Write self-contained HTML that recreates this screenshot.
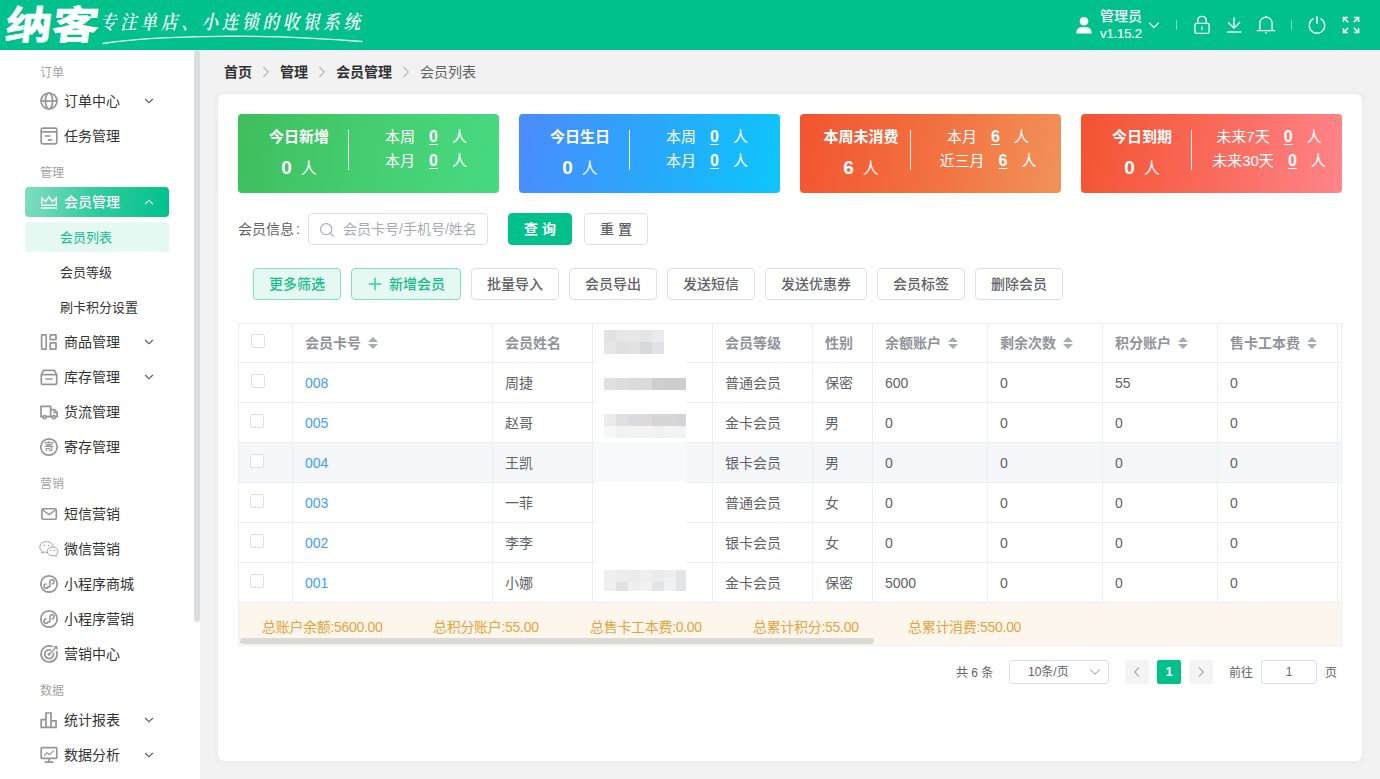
<!DOCTYPE html>
<html lang="zh-CN">
<head>
<meta charset="utf-8">
<title>会员列表 - 纳客收银系统</title>
<style>
*{box-sizing:border-box;margin:0;padding:0}
html,body{width:1380px;height:779px;overflow:hidden;background:#f2f2f2}
body{font-family:"Liberation Sans","Noto Sans CJK SC",sans-serif;font-size:14px;color:#333;-webkit-font-smoothing:antialiased}
#app{position:relative;width:1380px;height:779px;overflow:hidden;background:#f2f2f2}
.abs{position:absolute}
svg{display:block;overflow:visible}

/* ---------- header ---------- */
#hd{position:absolute;left:0;top:0;width:1380px;height:50px;background:#00c18b;color:#fff}
#hd .logo{position:absolute;left:6px;top:-2px;height:56px;line-height:56px;font-size:39px;font-weight:700;letter-spacing:0;-webkit-text-stroke:.8px #fff;white-space:nowrap;transform-origin:0 50%;transform:scale(1.19,1) skewX(-6deg)}
#hd .slogan{position:absolute;left:100px;top:10px;height:26px;line-height:26px;font-size:16.5px;letter-spacing:3.8px;white-space:nowrap;font-family:"Liberation Serif","Noto Serif CJK SC",serif;font-weight:600;font-style:italic;transform-origin:0 50%;transform:scaleY(1.18)}
#hd .swoosh{position:absolute;left:100px;top:33px}
#hd .user{position:absolute;left:1100px;top:7px;width:50px;font-size:14px;line-height:18px;white-space:nowrap;font-weight:500}
#hd .user .ver{font-size:13px;letter-spacing:-.1px;-webkit-text-stroke:.15px #fff}
#hd .ic{position:absolute}
#hd .sep{position:absolute;top:20px;width:1px;height:10px;background:rgba(255,255,255,.45)}

/* ---------- sidebar ---------- */
#sb{position:absolute;left:0;top:50px;width:200px;height:729px;background:#fff;overflow:hidden}
#sb .thumb{position:absolute;left:194px;top:0;width:6px;height:572px;background:#dcdddf;border-radius:3px}
#sb .track{position:absolute;left:200px;top:0}
#sb .grp{position:absolute;left:40px;height:20px;line-height:20px;font-size:12px;color:#a3a3a3}
#sb .it{position:absolute;left:25px;width:144px;height:30px;line-height:30px;border-radius:4px;font-size:14px;color:#333}
#sb .it .t{position:absolute;left:39px;top:0;white-space:nowrap}
#sb .it svg.i{position:absolute;left:15px;top:6px}
#sb .it svg.c{position:absolute;left:119px;top:11px}
#sb .it.on{background:linear-gradient(100deg,#83dcc0 0%,#30cb9e 50%,#00c18b 100%);color:#fff}
#sb .it.on .t{font-weight:500}
#sb .sub{position:absolute;left:25px;width:144px;height:30px;line-height:32px;border-radius:4px;font-size:13px;color:#333;padding-left:35px;white-space:nowrap}
#sb .sub.on{background:#e5f8f2;color:#0fbf8c}

/* ---------- main ---------- */
#bc{position:absolute;left:224px;top:61px;height:22px;line-height:22px;font-size:14px;white-space:nowrap;color:#303133;font-weight:700}
#bc span{position:absolute;top:0}
#bc svg{position:absolute;top:5px}
#card{position:absolute;left:218px;top:94px;width:1144px;height:667px;background:#fff;border-radius:6px;box-shadow:0 0 6px rgba(0,0,0,.06)}

/* ---------- stats ---------- */
.st{position:absolute;top:20px;width:261px;height:79px;border-radius:4px;color:#fff;white-space:nowrap}
.st .tt{position:absolute;left:1px;top:11px;width:120px;text-align:center;font-size:15px;font-weight:700;line-height:24px}
.st .nn{position:absolute;left:1px;top:41px;width:120px;text-align:center;font-size:16px;line-height:26px}
.st .nn b{font-size:19px;font-weight:700;margin-right:9px}
.st .dv{position:absolute;left:110px;top:16px;width:1px;height:40px;background:rgba(255,255,255,.9)}
.st .r{position:absolute;left:113px;width:150px;height:24px;line-height:24px;font-size:15px;text-align:center}
.st .r u{font-weight:700;font-size:16px;margin:0 14px 0 14px;text-underline-offset:2px}
.st .r1{top:11px}.st .r2{top:35px}
.s1{left:20px;background:linear-gradient(100deg,#3fbe5d 0%,#45cf72 55%,#47da82 100%)}
.s2{left:301px;background:linear-gradient(100deg,#4b8bfd 0%,#2aa7fb 50%,#0cc6fb 100%)}
.s3{left:582px;background:linear-gradient(100deg,#f35430 0%,#f2703f 50%,#f1925a 100%)}
.s4{left:863px;background:linear-gradient(100deg,#f35430 0%,#f9695a 50%,#ff858b 100%)}

/* ---------- search ---------- */
.lbl{position:absolute;left:20px;top:119px;height:32px;line-height:32px;font-size:14px;color:#606266;white-space:nowrap}
.inp{position:absolute;left:90px;top:119px;width:180px;height:32px;border:1px solid #dcdfe6;border-radius:4px;background:#fff}
.inp svg{position:absolute;left:10px;top:8px}
.inp span{position:absolute;left:34px;top:0;line-height:30px;font-size:14px;color:#a8abb2;white-space:nowrap}
.btn{position:absolute;height:32px;line-height:30px;border:1px solid #dcdfe6;border-radius:4px;background:#fff;color:#606266;font-size:14px;font-weight:500;text-align:center;white-space:nowrap}
.btn.pri{background:#00c18b;border-color:#00c18b;color:#fff;font-weight:700}
.btn.pl{background:#e5f8f2;border-color:#7fdfc4;color:#14bd8a}
.btn.pl svg{position:absolute;left:16px;top:8px}

/* ---------- table ---------- */
#tw{position:absolute;left:20px;top:229px;width:1104px;height:323px;border:1px solid #ebeef5;overflow:hidden;background:#fff}
#tb{border-collapse:separate;border-spacing:0;table-layout:fixed;width:1209px;font-size:14px;color:#606266}
#tb th,#tb td{border-right:1px solid #ebeef5;border-bottom:1px solid #ebeef5;padding:0 0 0 12px;text-align:left;white-space:nowrap;overflow:hidden;vertical-align:middle;line-height:22px}
#tb th{height:39px;font-weight:700;color:#909399}
#tb td{height:40px}
#tb tr.hv td{background:#f5f7fa}
#tb a{color:#409eff;text-decoration:none}
#tb .ck{display:block;width:14px;height:14px;border:1px solid #dcdfe6;border-radius:2px;background:#fff;position:relative;top:-2px}
#tb tbody tr+tr .ck{left:-1px}
#tb .so{display:inline-block;vertical-align:middle;width:10px;height:14px;margin-left:7px;position:relative;top:-1px}
#tb .so:before,#tb .so:after{content:"";position:absolute;left:0;border:5px solid transparent}
#tb .so:before{top:-4px;border-bottom-color:#a8abb2}
#tb .so:after{top:8px;border-top-color:#a8abb2}
#mz{position:absolute;left:357px;top:4px;width:90px;height:263px;background:#fff;overflow:hidden}
#mz b{position:absolute;left:0;top:114px;width:90px;height:40px;background:#f8f9fc;display:block}
#mz i{position:absolute;display:block;width:12px;height:12px}
#ft{position:absolute;left:0;top:279px;width:1102px;height:42px;background:#fdf6ec;color:#e6a23c;font-size:14px;line-height:22px}
#ft span{position:absolute;top:13px;white-space:nowrap;letter-spacing:-.3px}
#ft .sc{position:absolute;left:1px;top:35px;width:634px;height:6px;border-radius:3px;background:#dcd9d4}

/* ---------- pagination ---------- */
#pg{position:absolute;left:0;top:566px;width:1144px;height:24px;font-size:12px;color:#606266;line-height:24px}
#pg>*{position:absolute;top:0;height:24px;white-space:nowrap}
#pg .bx{border:1px solid #dcdfe6;border-radius:3px;background:#fff;line-height:22px}
#pg .pb{width:24px;border-radius:2px;background:#f4f4f5;text-align:center}
#pg .pb svg{margin:6px auto 0}
#pg .cur{background:#00c18b;color:#fff;font-weight:700;font-size:13px}
</style>
</head>
<body>
<div id="app">

<div id="hd">
  <div class="logo">纳客</div>
  <div class="slogan">专注单店、小连锁的收银系统</div>
  <svg class="swoosh" width="264" height="14" viewBox="0 0 264 14"><path d="M3 10.5 C60 1.5 170 1 262 8.5" fill="none" stroke="#fff" stroke-width="1.3" stroke-linecap="round" opacity=".92"/></svg>

  <svg class="ic" style="left:1075px;top:16px" width="18" height="18" viewBox="0 0 18 18"><circle cx="9" cy="5.3" r="4.3" fill="#fff"/><path d="M1.3 17.4 C1.3 13.4 3.6 11.3 6 11.3 H12 C14.4 11.3 16.7 13.4 16.7 17.4 Z" fill="#fff"/></svg>
  <div class="user"><div class="nm">管理员</div><div class="ver">v1.15.2</div></div>
  <svg class="ic" style="left:1148px;top:20px" width="12" height="10" viewBox="0 0 12 10"><path d="M1.2 2.6 L6 7.6 L10.8 2.6" fill="none" stroke="#fff" stroke-width="1.3"/></svg>
  <div class="sep" style="left:1176px"></div>
  <svg class="ic" style="left:1193px;top:15px" width="18" height="20" viewBox="0 0 18 20"><rect x="1.9" y="8.3" width="14.2" height="10" rx="1.6" fill="none" stroke="#fff" stroke-width="1.3"/><path d="M4.7 8.3 V5.6 a4.3 4.3 0 0 1 8.6 0 V8.3" fill="none" stroke="#fff" stroke-width="1.3"/><path d="M9 11.3 V15.3" stroke="#fff" stroke-width="1.4" opacity=".85"/></svg>
  <svg class="ic" style="left:1225px;top:15px" width="18" height="20" viewBox="0 0 18 20"><path d="M9 2.2 V12.6 M3 7.2 L9 13 L15 7.2" fill="none" stroke="#fff" stroke-width="1.3"/><path d="M2 17 H16.2" stroke="#fff" stroke-width="1.6" opacity=".85"/></svg>
  <svg class="ic" style="left:1256px;top:15px" width="20" height="20" viewBox="0 0 20 20"><path d="M3.9 15.6 V8.2 a6.1 6.1 0 0 1 12.2 0 V15.6" fill="none" stroke="#fff" stroke-width="1.3"/><path d="M1.3 15.7 H18.7" stroke="#fff" stroke-width="1.3" stroke-linecap="round"/><circle cx="10" cy="1.7" r="1" fill="#fff"/><path d="M8.6 17.3 H11.4 L10 18.9 Z" fill="#fff" opacity=".8"/></svg>
  <div class="sep" style="left:1291px"></div>
  <svg class="ic" style="left:1307px;top:15px" width="20" height="20" viewBox="0 0 20 20"><path d="M6.6 3.6 A7.7 7.7 0 1 0 13.4 3.6" fill="none" stroke="#fff" stroke-width="1.3"/><path d="M10 1.2 V8.8" stroke="#fff" stroke-width="1.8" opacity=".8"/></svg>
  <svg class="ic" style="left:1342px;top:16px" width="18" height="18" viewBox="0 0 18 18"><g fill="none" stroke="#fff" stroke-width="1.5"><path d="M1.4 6 V1.4 H6 M1.6 1.6 L6.2 6.2"/><path d="M12 1.4 H16.6 V6 M16.4 1.6 L11.8 6.2"/><path d="M1.4 12 V16.6 H6 M1.6 16.4 L6.2 11.8"/><path d="M12 16.6 H16.6 V12 M16.4 16.4 L11.8 11.8"/></g></svg>
</div>

<div id="sb">
  <div class="grp" style="top:13px">订单</div>
  <div class="it" style="top:36px"><svg class="i" width="18" height="18" viewBox="0 0 18 18" ><g fill="none" stroke="#959595" stroke-width="1.7"><circle cx="9" cy="9" r="8"/><ellipse cx="9" cy="9" rx="3.6" ry="8"/><path d="M1 9 H17"/></g></svg><span class="t">订单中心</span><svg class="c" width="10" height="8" viewBox="0 0 10 8"><path d="M1.2 2 L5 5.8 L8.8 2" fill="none" stroke="#555" stroke-width="1.1"/></svg></div>
  <div class="it" style="top:71px"><svg class="i" width="18" height="18" viewBox="0 0 18 18" ><g fill="none" stroke="#959595" stroke-width="1.7"><rect x="1.2" y="1.2" width="15.6" height="15.6" rx="1.6"/><path d="M1.2 4.8 H16.8 M4.6 9 H10.6 M7.8 12.8 H12"/></g></svg><span class="t">任务管理</span></div>
  <div class="grp" style="top:113px">管理</div>
  <div class="it on" style="top:137px"><svg class="i" width="18" height="18" viewBox="0 0 18 18" ><g fill="none" stroke="#fff" stroke-width="1.4" stroke-width="1.6"><path d="M1.7 4.9 L5.6 8.6 L9 3.8 L12.4 8.6 L16.3 4.9 V12.2 H1.7 Z" stroke-linejoin="miter"/><path d="M1 15 H17"/></g></svg><span class="t">会员管理</span><svg class="c" width="10" height="8" viewBox="0 0 10 8"><path d="M1.2 6 L5 2.2 L8.8 6" fill="none" stroke="#fff" stroke-width="1.1" opacity=".9"/></svg></div>
  <div class="sub on" style="top:172px">会员列表</div>
  <div class="sub" style="top:207px">会员等级</div>
  <div class="sub" style="top:242px">刷卡积分设置</div>
  <div class="it" style="top:277px"><svg class="i" width="18" height="18" viewBox="0 0 18 18" ><g fill="none" stroke="#959595" stroke-width="1.7"><rect x="1.6" y="1.8" width="4.6" height="14.4" rx=".4"/><rect x="10.2" y="1.8" width="5.8" height="4.8" rx=".4"/><rect x="10.2" y="9.8" width="5.8" height="6.4" rx=".4"/></g></svg><span class="t">商品管理</span><svg class="c" width="10" height="8" viewBox="0 0 10 8"><path d="M1.2 2 L5 5.8 L8.8 2" fill="none" stroke="#555" stroke-width="1.1"/></svg></div>
  <div class="it" style="top:312px"><svg class="i" width="18" height="18" viewBox="0 0 18 18" ><g fill="none" stroke="#959595" stroke-width="1.7"><path d="M1.3 6.6 L3.6 2.4 H14.4 L16.7 6.6 V15 a1.4 1.4 0 0 1 -1.4 1.4 H2.7 a1.4 1.4 0 0 1 -1.4 -1.4 Z M1.3 6.6 H16.7 M5.4 11 H12.6"/></g></svg><span class="t">库存管理</span><svg class="c" width="10" height="8" viewBox="0 0 10 8"><path d="M1.2 2 L5 5.8 L8.8 2" fill="none" stroke="#555" stroke-width="1.1"/></svg></div>
  <div class="it" style="top:347px"><svg class="i" width="18" height="18" viewBox="0 0 18 18" ><g fill="none" stroke="#959595" stroke-width="1.7"><path d="M1 3.4 H10.6 V13.6 H1 Z M10.6 6.6 H14.6 L17.2 9.6 V13.6 H10.6 M13.2 9.4 H16.4"/><circle cx="4.6" cy="14.2" r="1.5" fill="#fff"/><circle cx="13.8" cy="14.2" r="1.5" fill="#fff"/></g></svg><span class="t">货流管理</span></div>
  <div class="it" style="top:382px"><svg class="i" width="18" height="18" viewBox="0 0 18 18" ><circle cx="9" cy="9" r="8.2" fill="none" stroke="#959595" stroke-width="1.7"/><text x="9" y="12.4" font-size="10" text-anchor="middle" fill="#999" font-family="Liberation Sans,Noto Sans CJK SC,sans-serif" font-weight="700">寄</text></svg><span class="t">寄存管理</span></div>
  <div class="grp" style="top:424px">营销</div>
  <div class="it" style="top:449px"><svg class="i" width="18" height="18" viewBox="0 0 18 18" ><g fill="none" stroke="#959595" stroke-width="1.6"><rect x="1.9" y="3.7" width="14.4" height="10.6" rx="1.2"/><path d="M2.4 4.8 L9.1 9.6 L15.8 4.8" stroke-width="1.4"/></g></svg><span class="t">短信营销</span></div>
  <div class="it" style="top:484px"><svg class="i" width="20" height="18" viewBox="0 0 20 18" style="left:14px"><g fill="#fff" stroke="#a2a2a2" stroke-width="1"><path d="M7.4 1.6 C3.7 1.6 0.8 4 0.8 7 C0.8 8.7 1.7 10.1 3.2 11.1 L2.5 13.3 L5 12 C5.8 12.2 6.6 12.4 7.4 12.4 C11.1 12.4 14 10 14 7 C14 4 11.1 1.6 7.4 1.6 Z"/><path d="M13.6 7 C10.6 7 8.2 8.9 8.2 11.4 C8.2 13.8 10.6 15.8 13.6 15.8 C14.2 15.8 14.8 15.7 15.4 15.5 L17.4 16.6 L16.9 14.8 C18.2 14 19 12.8 19 11.4 C19 8.9 16.6 7 13.6 7 Z"/></g><g fill="#999"><circle cx="5.2" cy="5.6" r=".75"/><circle cx="9.6" cy="5.6" r=".75"/><circle cx="11.8" cy="10.4" r=".65"/><circle cx="15.4" cy="10.4" r=".65"/></g></svg><span class="t">微信营销</span></div>
  <div class="it" style="top:519px"><svg class="i" width="18" height="18" viewBox="0 0 18 18" ><g fill="none" stroke="#959595" stroke-width="1.7"><circle cx="9" cy="9" r="8.2"/><path d="M9.9 6.3 a2.1 2.1 0 1 1 2.1 2.6 M8.1 11.7 a2.1 2.1 0 1 1 -2.1 -2.6 M9.9 6.3 V11.7 a1.9 1.9 0 0 1 -1.8 0" stroke-width="1.5" stroke-linecap="round"/></g></svg><span class="t">小程序商城</span></div>
  <div class="it" style="top:554px"><svg class="i" width="18" height="18" viewBox="0 0 18 18" ><g fill="none" stroke="#959595" stroke-width="1.7"><circle cx="9" cy="9" r="8.2"/><path d="M9.9 6.3 a2.1 2.1 0 1 1 2.1 2.6 M8.1 11.7 a2.1 2.1 0 1 1 -2.1 -2.6 M9.9 6.3 V11.7 a1.9 1.9 0 0 1 -1.8 0" stroke-width="1.5" stroke-linecap="round"/></g></svg><span class="t">小程序营销</span></div>
  <div class="it" style="top:589px"><svg class="i" width="18" height="18" viewBox="0 0 18 18" ><g fill="none" stroke="#959595" stroke-width="1.7"><path d="M12.6 1.8 A8 8 0 1 0 16.6 6.2"/><path d="M11 5.2 A4.4 4.4 0 1 0 13.2 7.6"/><circle cx="9" cy="9.4" r="1.4" fill="#999" stroke="none"/><path d="M9.4 9 L16.4 2 M13.6 1.6 H16.8 V4.8" stroke-width="1.3"/></g></svg><span class="t">营销中心</span></div>
  <div class="grp" style="top:631px">数据</div>
  <div class="it" style="top:655px"><svg class="i" width="18" height="18" viewBox="0 0 18 18" ><g fill="none" stroke="#959595" stroke-width="1.7"><path d="M1.2 16.4 V8.6 H6 V16.4 M6 16.4 V2 H11 V16.4 M11 9.8 H16 V16.4 M0.6 16.4 H16.8"/></g></svg><span class="t">统计报表</span><svg class="c" width="10" height="8" viewBox="0 0 10 8"><path d="M1.2 2 L5 5.8 L8.8 2" fill="none" stroke="#555" stroke-width="1.1"/></svg></div>
  <div class="it" style="top:690px"><svg class="i" width="18" height="18" viewBox="0 0 18 18" ><g fill="none" stroke="#959595" stroke-width="1.7"><rect x="1.2" y="1.6" width="15.6" height="10.8" rx=".8"/><path d="M9 12.4 V16 M4.6 16.2 H13.4"/><path d="M4 9.6 L7 6.8 L9.4 8.6 L13.8 4.6" stroke-width="1.2"/></g></svg><span class="t">数据分析</span><svg class="c" width="10" height="8" viewBox="0 0 10 8"><path d="M1.2 2 L5 5.8 L8.8 2" fill="none" stroke="#555" stroke-width="1.1"/></svg></div>
  <div class="thumb"></div>
</div>

<div id="bc"><span style="left:0">首页</span><svg style="left:38px" width="8" height="12" viewBox="0 0 8 12"><path d="M1.4 1 L6.4 6 L1.4 11" fill="none" stroke="#b4b7bd" stroke-width="1.1"/></svg><span style="left:56px">管理</span><svg style="left:94px" width="8" height="12" viewBox="0 0 8 12"><path d="M1.4 1 L6.4 6 L1.4 11" fill="none" stroke="#b4b7bd" stroke-width="1.1"/></svg><span style="left:112px">会员管理</span><svg style="left:178px" width="8" height="12" viewBox="0 0 8 12"><path d="M1.4 1 L6.4 6 L1.4 11" fill="none" stroke="#b4b7bd" stroke-width="1.1"/></svg><span style="left:196px;font-weight:400;color:#606266">会员列表</span></div>
<div id="card">
<div class="st s1"><div class="tt">今日新增</div><div class="nn"><b>0</b>人</div><div class="dv"></div><div class="r r1">本周<u>0</u>人</div><div class="r r2">本月<u>0</u>人</div></div>
<div class="st s2"><div class="tt">今日生日</div><div class="nn"><b>0</b>人</div><div class="dv"></div><div class="r r1">本周<u>0</u>人</div><div class="r r2">本月<u>0</u>人</div></div>
<div class="st s3"><div class="tt">本周未消费</div><div class="nn"><b>6</b>人</div><div class="dv"></div><div class="r r1">本月<u>6</u>人</div><div class="r r2">近三月<u>6</u>人</div></div>
<div class="st s4"><div class="tt">今日到期</div><div class="nn"><b>0</b>人</div><div class="dv"></div><div class="r r1">未来7天<u>0</u>人</div><div class="r r2">未来30天<u>0</u>人</div></div>
<div class="lbl">会员信息<span style="margin-left:2px">:</span></div>
<div class="inp"><svg width="16" height="16" viewBox="0 0 16 16"><circle cx="7.2" cy="7.2" r="5.6" fill="none" stroke="#a8abb2" stroke-width="1.1"/><path d="M11.4 11.4 L14 14" stroke="#a8abb2" stroke-width="1.2" stroke-linecap="round"/></svg><span>会员卡号/手机号/姓名</span></div>
<div class="btn pri" style="left:290px;top:119px;width:64px">查 询</div>
<div class="btn" style="left:366px;top:119px;width:64px">重 置</div>
<div class="btn pl" style="left:35px;top:174px;width:88px">更多筛选</div>
<div class="btn pl" style="left:133px;top:174px;width:110px;padding-left:22px"><svg width="14" height="14" viewBox="0 0 14 14"><path d="M7 .8 V13.2 M.8 7 H13.2" stroke="#3ccb9f" stroke-width="1.5"/></svg>新增会员</div>
<div class="btn " style="left:253px;top:174px;width:88px">批量导入</div>
<div class="btn " style="left:351px;top:174px;width:88px">会员导出</div>
<div class="btn " style="left:449px;top:174px;width:88px">发送短信</div>
<div class="btn " style="left:547px;top:174px;width:102px">发送优惠券</div>
<div class="btn " style="left:659px;top:174px;width:88px">会员标签</div>
<div class="btn " style="left:757px;top:174px;width:88px">删除会员</div>
<div id="tw">
<table id="tb"><colgroup><col style="width:54px"><col style="width:200px"><col style="width:100px"><col style="width:120px"><col style="width:100px"><col style="width:60px"><col style="width:115px"><col style="width:115px"><col style="width:115px"><col style="width:120px"><col style="width:110px"></colgroup>
<thead><tr>
<th><span class="ck"></span></th>
<th>会员卡号<span class="so"></span></th>
<th>会员姓名</th>
<th></th>
<th>会员等级</th>
<th>性别</th>
<th>余额账户<span class="so"></span></th>
<th>剩余次数<span class="so"></span></th>
<th>积分账户<span class="so"></span></th>
<th>售卡工本费<span class="so"></span></th>
<th></th>
</tr></thead><tbody>
<tr><td><span class="ck"></span></td><td><a>008</a></td><td>周捷</td><td></td><td>普通会员</td><td>保密</td><td>600</td><td>0</td><td>55</td><td>0</td><td></td></tr>
<tr><td><span class="ck"></span></td><td><a>005</a></td><td>赵哥</td><td></td><td>金卡会员</td><td>男</td><td>0</td><td>0</td><td>0</td><td>0</td><td></td></tr>
<tr class="hv"><td><span class="ck"></span></td><td><a>004</a></td><td>王凯</td><td></td><td>银卡会员</td><td>男</td><td>0</td><td>0</td><td>0</td><td>0</td><td></td></tr>
<tr><td><span class="ck"></span></td><td><a>003</a></td><td>一菲</td><td></td><td>普通会员</td><td>女</td><td>0</td><td>0</td><td>0</td><td>0</td><td></td></tr>
<tr><td><span class="ck"></span></td><td><a>002</a></td><td>李李</td><td></td><td>银卡会员</td><td>女</td><td>0</td><td>0</td><td>0</td><td>0</td><td></td></tr>
<tr><td><span class="ck"></span></td><td><a>001</a></td><td>小娜</td><td></td><td>金卡会员</td><td>保密</td><td>5000</td><td>0</td><td>0</td><td>0</td><td></td></tr>
</tbody></table>
<div id="mz"><b></b>
<i style="left:8px;top:2px;background:#e2e2e3"></i>
<i style="left:20px;top:2px;background:#e6e6e7"></i>
<i style="left:32px;top:2px;background:#e7e7e8"></i>
<i style="left:44px;top:2px;background:#e5e5e6"></i>
<i style="left:56px;top:2px;background:#ebebed"></i>
<i style="left:8px;top:14px;background:#e6e6e7"></i>
<i style="left:20px;top:14px;background:#dfe0e2"></i>
<i style="left:32px;top:14px;background:#e2e2e3"></i>
<i style="left:44px;top:14px;background:#d8d9db"></i>
<i style="left:56px;top:14px;background:#e1e2e5"></i>
<i style="left:8px;top:50px;background:#e0e0df"></i>
<i style="left:20px;top:50px;background:#dcdddf"></i>
<i style="left:32px;top:50px;background:#ddd9d7"></i>
<i style="left:44px;top:50px;background:#dadbde"></i>
<i style="left:56px;top:50px;background:#cfcfd0"></i>
<i style="left:68px;top:50px;background:#cbcdcf"></i>
<i style="left:80px;top:50px;background:#cccdce"></i>
<i style="left:8px;top:86px;background:#ecece9"></i>
<i style="left:20px;top:86px;background:#dfe0e2"></i>
<i style="left:32px;top:86px;background:#dbdbdd"></i>
<i style="left:44px;top:86px;background:#dcdadb"></i>
<i style="left:56px;top:86px;background:#d6d6d8"></i>
<i style="left:68px;top:86px;background:#d6d6d7"></i>
<i style="left:80px;top:86px;background:#d4d4d6"></i>
<i style="left:8px;top:98px;background:#f7f7f7"></i>
<i style="left:20px;top:98px;background:#f1f2f4"></i>
<i style="left:32px;top:98px;background:#f3f3f1"></i>
<i style="left:44px;top:98px;background:#f3f3f3"></i>
<i style="left:56px;top:98px;background:#f1f1f1"></i>
<i style="left:68px;top:98px;background:#f3f3f3"></i>
<i style="left:80px;top:98px;background:#f2f2f2"></i>
<i style="left:8px;top:242px;background:#efeff0"></i>
<i style="left:20px;top:242px;background:#ededee"></i>
<i style="left:32px;top:242px;background:#ebebec"></i>
<i style="left:44px;top:242px;background:#efeff0"></i>
<i style="left:56px;top:242px;background:#eaebec"></i>
<i style="left:68px;top:242px;background:#eeeeef"></i>
<i style="left:80px;top:242px;background:#e3e4e6"></i>
<i style="left:8px;top:254px;background:#f0f0f1"></i>
<i style="left:20px;top:254px;background:#e0e1e3"></i>
<i style="left:32px;top:254px;background:#efeff0"></i>
<i style="left:44px;top:254px;background:#f1f1f2"></i>
<i style="left:56px;top:254px;background:#e3e4e5"></i>
<i style="left:68px;top:254px;background:#f1f1f2"></i>
<i style="left:80px;top:254px;background:#e4e5e7"></i>
</div>
<div id="ft"><span style="left:23px">总账户余额:5600.00</span><span style="left:194px">总积分账户:55.00</span><span style="left:351px">总售卡工本费:0.00</span><span style="left:514px">总累计积分:55.00</span><span style="left:669px">总累计消费:550.00</span><div class="sc"></div></div>
</div>
<div id="pg">
<span style="left:738px;top:1px">共 6 条</span>
<div class="bx" style="left:791px;width:100px"><span style="position:absolute;left:18px;top:0">10条/页</span><svg style="position:absolute;left:79px;top:7px" width="12" height="8" viewBox="0 0 12 8"><path d="M1.2 1.4 L6 6.2 L10.8 1.4" fill="none" stroke="#b0b3b9" stroke-width="1.1"/></svg></div>
<div class="pb" style="left:907px"><svg width="8" height="12" viewBox="0 0 8 12"><path d="M6 1.4 L1.8 6 L6 10.6" fill="none" stroke="#a8abb2" stroke-width="1.2"/></svg></div>
<div class="pb cur" style="left:939px">1</div>
<div class="pb" style="left:971px"><svg width="8" height="12" viewBox="0 0 8 12"><path d="M2 1.4 L6.2 6 L2 10.6" fill="none" stroke="#a8abb2" stroke-width="1.2"/></svg></div>
<span style="left:1011px;top:1px">前往</span>
<div class="bx" style="left:1043px;width:56px;text-align:center">1</div>
<span style="left:1107px;top:1px">页</span>
</div>
</div>

</div>
</body>
</html>
